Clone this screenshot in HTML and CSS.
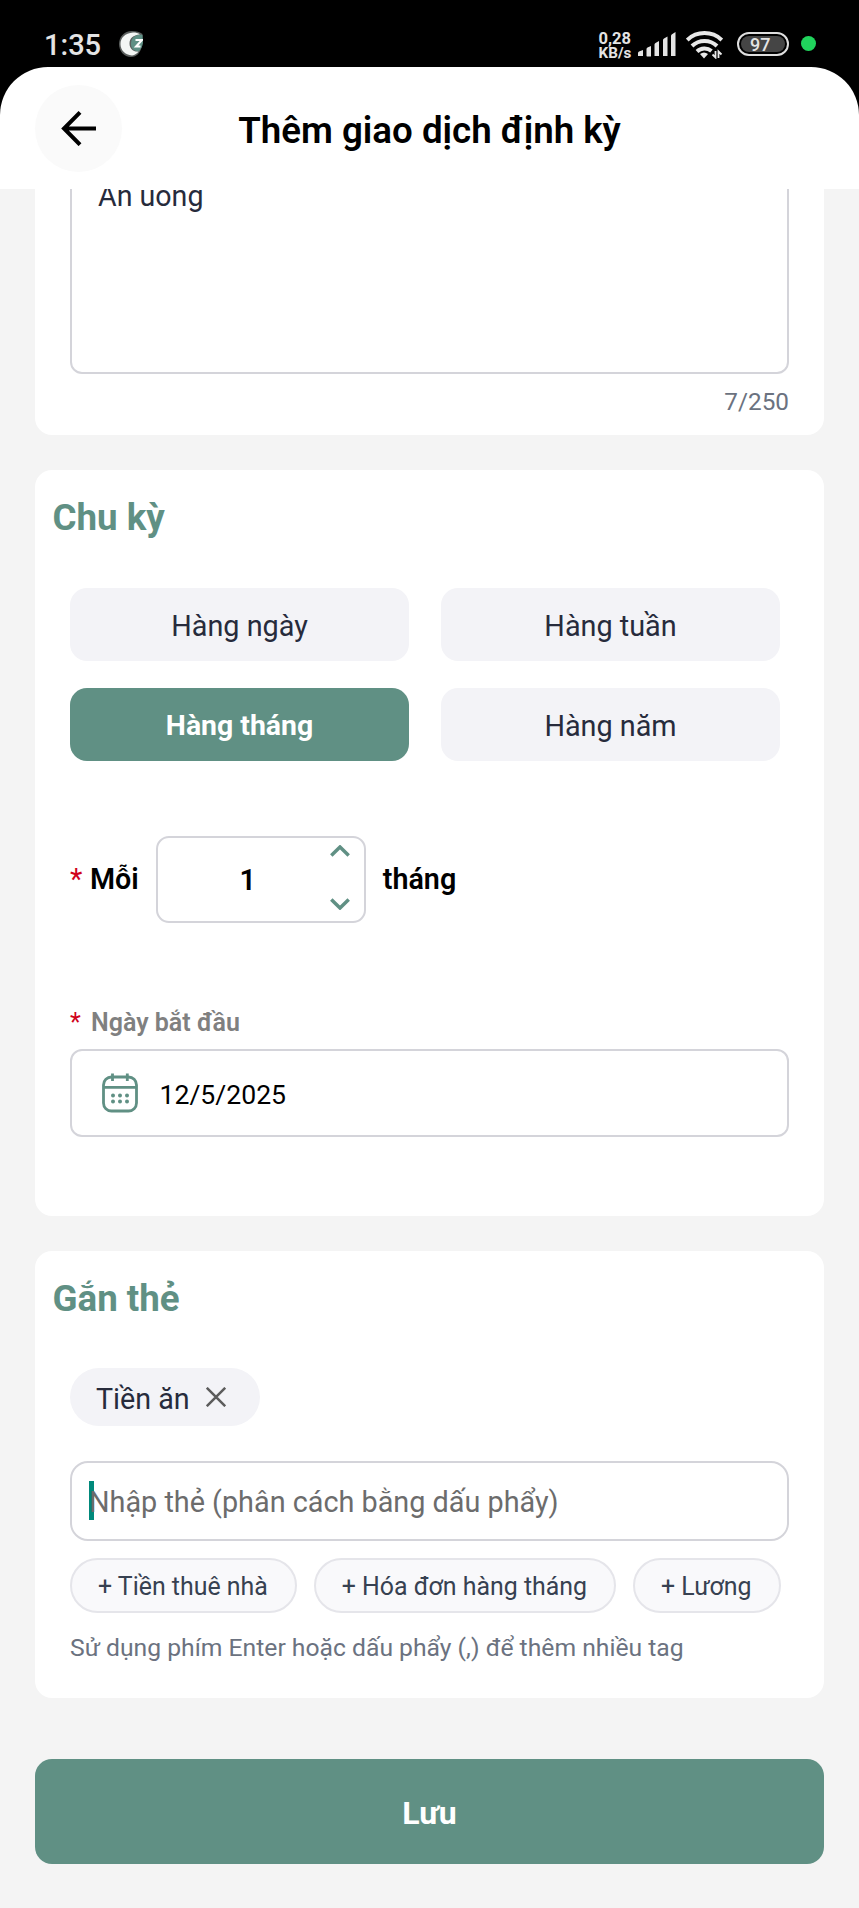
FILE: index.html
```html
<!DOCTYPE html>
<html lang="vi">
<head>
<meta charset="utf-8">
<title>Thêm giao dịch định kỳ</title>
<link rel="stylesheet" href="styles.css">
</head>
<body>
<div class="screen">
  <div class="status">
    <span class="time">1:35</span>
    <svg class="app-dot" width="24" height="26" viewBox="0 0 24 26">
      <path d="M23.500 3C21 1 17 0 13 0 5 0 0 6 0 13s5 13 12 13c6 0 9-4 11-11Z" fill="#5b5f5e"/>
      <path d="M14 1.500C6 2 1.500 7 1.500 13S6 24 13 24.500C16 24 18 22.500 19.500 20.500 14 21 10.500 17.500 10.500 12.500S14 4 21 3.500C19 2 17 1.500 14 1.500Z" fill="#f4f6f5"/>
      <path d="M23.500 4C15 3 12 8 12 13s4 8 8 7c2-2 3.500-5 4-8Z" fill="#5f9085"/>
      <path d="M16.500 9H23L17 15.500H21.500" fill="none" stroke="#fff" stroke-width="2"/>
    </svg>
    <div class="speed"><span class="rate">0,28</span><span>KB/s</span></div>
    <svg class="signal" width="38" height="25" viewBox="0 0 38 25" fill="#e4e4e4">
      <path d="M0 24v-3q0-1 1-1.500l4-1.500v6zM8.500 24v-7q0-1 1-1.500l3.500-1.500v10q0 .5-.5.500h-3.500zM16.500 24V12.500q0-1 1-1.500l3.500-2v15zM25 24V8q0-1 1-1.500l3.500-2V24zM33 24V4q0-1 1-1.700L37.500 0V24z"/>
    </svg>
    <svg class="wifi" width="37" height="28" viewBox="0 0 37 28">
      <g fill="none" stroke="#e8e8e8" stroke-width="4">
        <path d="M1.200 9a25 25 0 0 1 34.600 0"/>
        <path d="M6 15a18 18 0 0 1 25 0"/>
        <path d="M11 20.500a11 11 0 0 1 14.500-.5"/>
      </g>
      <path d="M14 23a6.500 6.500 0 0 1 8 0l-4 4.500z" fill="#e8e8e8"/>
      <path d="M29.500 20v6.500l-3-3M32.500 27v-6.500l3 3" fill="none" stroke="#e8e8e8" stroke-width="1.800"/>
    </svg>
    <div class="battery"><span>97</span></div>
    <i class="live"></i>
  </div>

  <header class="header">
    <button class="back" aria-label="Back">
      <svg width="36" height="36" viewBox="0 0 36 36" fill="none" stroke="#000" stroke-width="4"><path d="M35 18.500H3M19 2.300L3 18.500 19 34.700"/></svg>
    </button>
    <h1 class="title">Thêm giao dịch định kỳ</h1>
  </header>

  <main class="content">
    <section class="card note">
      <div class="textarea">Ăn uống</div>
      <div class="counter">7/250</div>
    </section>

    <section class="card cycle">
      <h2 class="heading">Chu kỳ</h2>
      <div class="options">
        <button class="option">Hàng ngày</button>
        <button class="option">Hàng tuần</button>
        <button class="option selected">Hàng tháng</button>
        <button class="option">Hàng năm</button>
      </div>
      <div class="every">
        <span class="star">*</span><span class="word">Mỗi</span>
        <div class="stepper">
          <span class="value">1</span>
          <div class="arrows">
            <svg width="20" height="12" viewBox="0 0 20 12"><path d="M1.300 10.500L10 2l8.700 8.500"/></svg>
            <svg width="20" height="12" viewBox="0 0 20 12"><path d="M1.300 1.500L10 10l8.700-8.500"/></svg>
          </div>
        </div>
        <span class="word">tháng</span>
      </div>
      <div class="label"><span class="star small">*</span>Ngày bắt đầu</div>
      <div class="date">
        <svg width="36" height="40" viewBox="0 0 36 40" fill="none" stroke="#609084" stroke-width="2.800">
          <rect x="1.500" y="4" width="33" height="34" rx="8"/>
          <path d="M1.300 14.300H34.700M10.500 0.500V8M25.300 0.500V8"/>
          <g fill="#609084" stroke="none"><circle cx="11" cy="22.500" r="2"/><circle cx="18" cy="22.500" r="2"/><circle cx="25" cy="22.500" r="2"/><circle cx="11" cy="28.500" r="2"/><circle cx="18" cy="28.500" r="2"/><circle cx="25" cy="28.500" r="2"/></g>
        </svg>
        <span>12/5/2025</span>
      </div>
    </section>

    <section class="card tags">
      <h2 class="heading">Gắn thẻ</h2>
      <div class="chip"><span>Tiền ăn</span>
        <svg width="20" height="20" viewBox="0 0 20 20" stroke="#5c5c5c" stroke-width="2.500"><path d="M.8.8l18.400 18.400M19.200.8L.8 19.200"/></svg>
      </div>
      <div class="entry"><i class="caret"></i><span>Nhập thẻ (phân cách bằng dấu phẩy)</span></div>
      <div class="pills">
        <button class="pill">+ Tiền thuê nhà</button>
        <button class="pill">+ Hóa đơn hàng tháng</button>
        <button class="pill">+ Lương</button>
      </div>
      <p class="hint">Sử dụng phím Enter hoặc dấu phẩy (,) để thêm nhiều tag</p>
    </section>

    <button class="save">Lưu</button>
  </main>
</div>
</body>
</html>
```
FILE: styles.css
```css
* { box-sizing: border-box; margin: 0; padding: 0; }
body { background: #000; font-family: Roboto, "Noto Sans", sans-serif; }
button { border: 0; font: inherit; }
svg { display: block; flex: none; }
.screen { width: 859px; height: 1908px; overflow: hidden; display: flex; flex-direction: column; }

.status { height: 67px; flex: none; display: flex; align-items: flex-start; padding: 31px 43px 0 44px; color: #e4e4e4; }
.time { width: 75px; font-size: 29px; line-height: 28px; font-weight: 500; white-space: nowrap; }
.speed { width: 40px; margin-left: 456px; font-size: 15.2px; line-height: 15px; font-weight: 700; display: flex; flex-direction: column; white-space: nowrap; }
.rate { font-size: 16.5px; }
.signal { margin: 1px 10px 0 0; }
.wifi { margin-right: 14px; }
.battery { width: 52px; height: 24px; margin: 1px 12px 0 0; border: 2px solid #dedede; border-radius: 12px; padding: 2px; line-height: 17px; font-size: 18px; font-weight: 500; text-align: center; }
.battery span { display: block; height: 16px; background: #454545; border-radius: 8px; padding-right: 6px; }
.live { width: 15px; height: 15px; margin-top: 5px; border-radius: 50%; background: #20d35c; }

.header { height: 122px; flex: none; display: flex; align-items: center; background: #fff; border-radius: 48px 48px 0 0; padding: 0 35px; }
.back { width: 87px; height: 87px; border-radius: 50%; background: #fafafa; display: flex; align-items: center; justify-content: center; }
.title { flex: 1; padding: 5px 87px 0 0; text-align: center; font-size: 36.7px; line-height: 42px; font-weight: 600; color: #000; }

.content { flex: 1; min-height: 0; overflow: hidden; background: #f4f4f4; padding: 0 35px; display: flex; flex-direction: column; }
.card { flex: none; background: #fff; border-radius: 17px; }
.note { height: 300px; margin-top: -54px; padding: 0 35px; }
.textarea { height: 239px; border: 2px solid #d4d4da; border-radius: 12px; padding: 43px 26px; font-size: 28.6px; line-height: 33px; color: #272b3c; }
.counter { margin-top: 13px; text-align: right; font-size: 24.3px; line-height: 30px; color: #6b7280; }
.cycle { height: 746px; margin-top: 35px; padding: 27px 35px 0; }
.heading { margin-left: -17.500px; font-size: 36.7px; line-height: 42px; font-weight: 700; color: #609084; }
.options { margin: 49px 9px 0 0; display: grid; grid-template-columns: 1fr 1fr; gap: 27px 32px; }
.option { height: 73px; padding-top: 2px; border-radius: 17px; background: #f3f3f7; font-size: 28.8px; color: #272b3c; }
.selected { background: #609084; color: #fff; font-weight: 700; font-size: 28.4px; }
.every { margin-top: 75px; height: 87px; display: flex; align-items: center; font-size: 28.7px; font-weight: 600; color: #000; }
.word { padding-bottom: 2px; }
.star { width: 20px; padding-bottom: 2px; font-weight: 400; color: #d0021b; }
.stepper { width: 210px; height: 87px; margin: 0 17px; border: 2px solid #d4d4da; border-radius: 13px; display: flex; }
.value { flex: 1; padding-left: 26px; line-height: 84px; text-align: center; }
.arrows { width: 52px; display: flex; flex-direction: column; justify-content: space-between; padding: 7px 14px 11px 0; align-items: flex-end; }
.arrows path { fill: none; stroke: #609084; stroke-width: 3.5; }
.label { margin-top: 85px; display: flex; height: 30px; font-size: 25px; line-height: 30px; font-weight: 600; color: #808080; }
.small { width: 21px; }
.date { height: 88px; margin-top: 11px; border: 2px solid #d4d4da; border-radius: 12px; padding: 0 30px; display: flex; align-items: center; gap: 21.500px; font-size: 26.6px; color: #000; }
.date span { padding-top: 2px; }
.tags { height: 447px; margin-top: 35px; padding: 27px 35px 0; }
.chip { width: 190px; height: 58px; margin-top: 48px; border-radius: 29px; background: #f3f3f7; display: flex; align-items: center; padding: 0 34px 0 26px; justify-content: space-between; font-size: 28.7px; color: #272b3c; white-space: nowrap; }
.chip span { padding-top: 3px; }
.entry { position: relative; height: 80px; margin-top: 35px; border: 2px solid #d4d4da; border-radius: 18px; padding-left: 17px; font-size: 28.8px; line-height: 78px; color: #6c6c6c; }
.entry span { position: relative; }
.caret { position: absolute; left: 17px; top: 18px; width: 5px; height: 39px; background: #00897b; }
.pills { margin-top: 17px; display: flex; gap: 17px; }
.pill { height: 55px; padding: 2px 27px 0 26px; border: 2px solid #e5e5ea; border-radius: 28px; background: #f9f9fb; font-size: 24.9px; color: #374151; white-space: nowrap; }
.hint { margin-top: 20px; font-size: 24.7px; line-height: 30px; color: #6b7280; white-space: nowrap; }
.save { flex: none; height: 105px; margin-top: 61px; padding-top: 3px; border-radius: 17px; background: #609084; color: #fff; font-size: 32px; font-weight: 700; }
```
